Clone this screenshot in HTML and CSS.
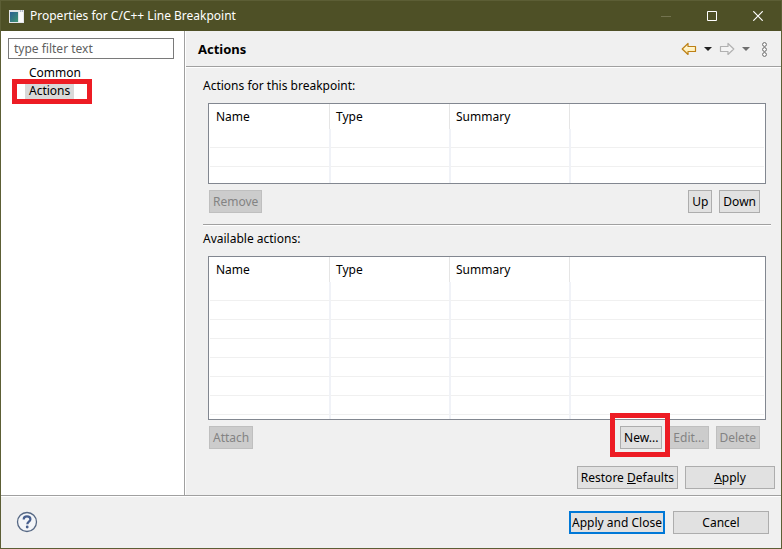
FILE: index.html
```html
<!DOCTYPE html>
<html lang="en">
<head>
<meta charset="utf-8">
<title>Properties for C/C++ Line Breakpoint</title>
<link rel="stylesheet" href="styles.css">
</head>
<body>
<div class="window">
  <header class="titlebar">
    <svg class="app-icon" width="15" height="13" viewBox="0 0 15 13" aria-hidden="true">
      <defs>
        <linearGradient id="pane" x1="0" y1="0" x2="1" y2="1">
          <stop offset="0" stop-color="#2c5f96"/>
          <stop offset="1" stop-color="#3f9470"/>
        </linearGradient>
      </defs>
      <rect width="15" height="13" fill="#e4e6ea"/>
      <rect x="1" y="2" width="8" height="10" fill="url(#pane)"/>
      <rect x="10" y="2" width="4" height="10" fill="#fafafa"/>
      <path d="M11 1h1M13 1h1" stroke="#7f8ea6"/>
    </svg>
    <h1 class="title">Properties for C/C++ Line Breakpoint</h1>
    <div class="window-controls">
      <button class="window-button" aria-label="Minimize" disabled>
        <svg width="10" height="10" viewBox="0 0 10 10"><path d="M0 5.5h10" stroke="#73734f"/></svg>
      </button>
      <button class="window-button" aria-label="Maximize">
        <svg width="10" height="10" viewBox="0 0 10 10"><path d="M.5.5h9v9h-9z" fill="none" stroke="#fff"/></svg>
      </button>
      <button class="window-button" aria-label="Close">
        <svg width="10" height="10" viewBox="0 0 10 10"><path d="M.3.3l9.4 9.4M9.7.3L.3 9.7" stroke="#fff" stroke-width="1.2"/></svg>
      </button>
    </div>
  </header>

  <div class="content">
    <nav class="sidebar">
      <input class="filter" type="text" placeholder="type filter text" aria-label="type filter text">
      <ul class="tree">
        <li><a class="tree-item" href="#common">Common</a></li>
        <li><a class="tree-item selected marked" href="#actions" aria-current="page">Actions</a></li>
      </ul>
    </nav>

    <main class="page">
      <div class="page-header">
        <h2 class="page-title">Actions</h2>
        <div class="history">
          <button class="tool" aria-label="Back">
            <svg width="16" height="14" viewBox="0 0 16 14">
              <defs>
                <linearGradient id="gold" x1="0" y1="0" x2="0" y2="1">
                  <stop offset="0" stop-color="#fffbe6"/>
                  <stop offset="1" stop-color="#ffe9a3"/>
                </linearGradient>
              </defs>
              <path d="M1.2 7L7 1.5V4.500h7.500v5H7V12.500z" fill="url(#gold)" stroke="#bd8015" stroke-width="1.2" stroke-linejoin="round"/>
            </svg>
          </button>
          <button class="tool" aria-label="Back history">
            <svg width="8" height="4" viewBox="0 0 8 4"><path d="M0 0h8L4 4z" fill="#222"/></svg>
          </button>
          <button class="tool" aria-label="Forward" disabled>
            <svg width="16" height="14" viewBox="0 0 16 14">
              <path d="M14.800 7L9 1.500V4.500H1.500v5H9V12.500z" fill="#f4f4f4" stroke="#b1b1b1" stroke-width="1.2" stroke-linejoin="round"/>
            </svg>
          </button>
          <button class="tool" aria-label="Forward history" disabled>
            <svg width="8" height="4" viewBox="0 0 8 4"><path d="M0 0h8L4 4z" fill="#6f6f6f"/></svg>
          </button>
          <button class="tool tool-menu" aria-label="View menu">
            <svg width="5" height="15" viewBox="0 0 5 15" fill="#fff" stroke="#666">
              <circle cx="2.5" cy="2.500" r="1.900"/><circle cx="2.5" cy="7.500" r="1.900"/><circle cx="2.5" cy="12.500" r="1.900"/>
            </svg>
          </button>
        </div>
      </div>

      <div class="page-body">
        <section class="group" aria-labelledby="current-label">
          <h3 class="label" id="current-label">Actions for this breakpoint:</h3>
          <div class="table-box">
            <table class="grid" aria-labelledby="current-label">
              <thead><tr><th class="col">Name</th><th class="col">Type</th><th class="col">Summary</th><td></td></tr></thead>
              <tbody>
                <tr><td></td><td></td><td></td><td></td></tr>
                <tr><td></td><td></td><td></td><td></td></tr>
                <tr><td></td><td></td><td></td><td></td></tr>
              </tbody>
            </table>
          </div>
          <div class="button-row">
            <button class="button" disabled>Remove</button>
            <span class="spacer"></span>
            <button class="button">Up</button>
            <button class="button">Down</button>
          </div>
        </section>

        <section class="group group-available" aria-labelledby="available-label">
          <h3 class="label" id="available-label">Available actions:</h3>
          <div class="table-box">
            <table class="grid" aria-labelledby="available-label">
              <thead><tr><th class="col">Name</th><th class="col">Type</th><th class="col">Summary</th><td></td></tr></thead>
              <tbody>
                <tr><td></td><td></td><td></td><td></td></tr>
                <tr><td></td><td></td><td></td><td></td></tr>
                <tr><td></td><td></td><td></td><td></td></tr>
                <tr><td></td><td></td><td></td><td></td></tr>
                <tr><td></td><td></td><td></td><td></td></tr>
                <tr><td></td><td></td><td></td><td></td></tr>
                <tr><td></td><td></td><td></td><td></td></tr>
                <tr><td></td><td></td><td></td><td></td></tr>
              </tbody>
            </table>
          </div>
          <div class="button-row">
            <button class="button" disabled>Attach</button>
            <span class="spacer"></span>
            <button class="button marked">New...</button>
            <button class="button" disabled>Edit...</button>
            <button class="button" disabled>Delete</button>
          </div>
        </section>
      </div>

      <div class="page-actions">
        <button class="button button-wide">Restore <u>D</u>efaults</button>
        <button class="button button-wide"><u>A</u>pply</button>
      </div>
    </main>
  </div>

  <footer class="footer">
    <button class="tool" aria-label="Help">
      <svg width="22" height="22" viewBox="0 0 22 22">
        <circle cx="11" cy="11" r="9.500" fill="#f3f5f8" stroke="#566884" stroke-width="1.300"/>
        <path d="M7.700 8.400C7.700 6.300 9.200 5.300 11 5.300c2 0 3.400 1.100 3.400 2.900 0 2.400-3.100 2.500-3.100 5" fill="none" stroke="#475f8e" stroke-width="2.200"/>
        <circle cx="11.200" cy="16" r="1.400" fill="#475f8e"/>
      </svg>
    </button>
    <span class="spacer"></span>
    <button class="button button-dialog default">Apply and Close</button>
    <button class="button button-dialog">Cancel</button>
  </footer>
</div>
</body>
</html>
```

FILE: styles.css
```css
* {
  box-sizing: border-box;
}

body {
  margin: 0;
  font: 12px/18px "Noto Sans", "Open Sans", sans-serif;
  color: #000;
}

h1, h2, h3, ul {
  margin: 0;
  padding: 0;
  font-size: inherit;
  font-weight: normal;
  list-style: none;
}

button {
  font: inherit;
  color: inherit;
}

.window {
  display: flex;
  flex-direction: column;
  min-height: 100vh;
  border: 1px solid #5c5e35;
  background: #f0f0f0;
}

.titlebar {
  display: flex;
  align-items: center;
  height: 30px;
  padding-left: 8px;
  background: #4e5026;
  color: #fff;
}

.title {
  flex: 1;
  margin-left: 6px;
}

.window-controls {
  display: flex;
}

.window-button {
  display: flex;
  align-items: center;
  justify-content: center;
  width: 46px;
  height: 30px;
  padding: 0;
  border: 0;
  background: none;
}

.content {
  flex: 1;
  display: flex;
  border-bottom: 1px solid #a0a0a0;
}

.sidebar {
  width: 184px;
  padding: 7px 10px 0 7px;
  border-right: 1px solid #a0a0a0;
  background: #fff;
}

.filter {
  display: block;
  width: 100%;
  height: 21px;
  padding: 0 5px;
  border: 1px solid #7a7a7a;
  font: inherit;
}

.filter::placeholder {
  color: #5f5f5f;
  opacity: 1;
}

.tree {
  padding: 5px 0 0 17px;
}

.tree-item {
  position: relative;
  display: table;
  padding: 0 4px;
  color: inherit;
  text-decoration: none;
}

.selected {
  background: #d9d9d9;
}

/* Red callout frames around the highlighted controls */
.marked {
  position: relative;
}

.marked::after {
  content: "";
  position: absolute;
  inset: -14px -9px -9px -11px;
  border: 5px solid #ed1c24;
  pointer-events: none;
}

.tree-item.marked::after {
  inset: -3px -18px -4px -13px;
}

.page {
  flex: 1;
  display: flex;
  flex-direction: column;
  min-width: 0;
  border-left: 1px solid #fff;
}

.page-header {
  display: flex;
  align-items: center;
  justify-content: space-between;
  height: 37px;
  padding: 0 14px 0 12px;
  border-bottom: 1px solid #fff;
  box-shadow: inset 0 -1px #a0a0a0;
}

.page-title {
  font-size: 13px;
  font-weight: bold;
}

.history {
  display: flex;
  align-items: center;
  gap: 7px;
}

.tool {
  display: flex;
  padding: 0;
  border: 0;
  background: none;
}

.tool-menu {
  margin-left: 5px;
}

.page-body {
  flex: 1;
  display: flex;
  flex-direction: column;
  padding: 9px 10px 0 17px;
}

.group {
  padding-bottom: 11px;
}

.group-available {
  padding-top: 5px;
  border-top: 1px solid #a0a0a0;
  box-shadow: inset 0 1px #fff;
}

.label {
  margin-bottom: 8px;
}

.table-box {
  height: 81px;
  margin: 0 5px;
  padding: 0 1px 1px;
  border: 1px solid #828790;
  background: #fff;
  overflow: hidden;
}

.group-available .table-box {
  height: 164px;
}

.grid {
  width: 100%;
  border-collapse: separate;
  border-spacing: 0;
  table-layout: fixed;
}

.grid th,
.grid td {
  padding: 0;
  text-align: left;
  font-weight: normal;
}

.grid thead tr {
  height: 25px;
}

.grid .col {
  width: 120px;
  padding-left: 6px;
  border-right: 1px solid #e5e5e5;
}

.grid tbody td {
  height: 19px;
  border-bottom: 1px solid #f0f0f0;
}

.grid tbody td:not(:last-child) {
  border-right: 1px solid #f0f2f7;
}

.grid tbody td + td {
  border-left: 1px solid #f0f2f7;
}

.button-row {
  display: flex;
  gap: 7px;
  margin: 6px 11px 0 6px;
}

.spacer {
  flex: 1;
}

.button {
  height: 23px;
  padding: 0 3px;
  border: 1px solid #adadad;
  background: #e1e1e1;
  line-height: 20px;
  white-space: nowrap;
}

.button:disabled {
  border-color: #bfbfbf;
  background: #ccc;
  color: #838383;
}

.page-actions {
  display: flex;
  justify-content: flex-end;
  gap: 7px;
  padding: 0 6px 6px;
}

.button-wide {
  min-width: 90px;
}

.footer {
  display: flex;
  align-items: flex-start;
  gap: 8px;
  height: 52px;
  padding: 14px 12px 0 15px;
  border-top: 1px solid #fff;
}

.button-dialog {
  width: 96px;
}

.default {
  padding: 0;
  border: 2px solid #0078d7;
  line-height: 18px;
}
```
